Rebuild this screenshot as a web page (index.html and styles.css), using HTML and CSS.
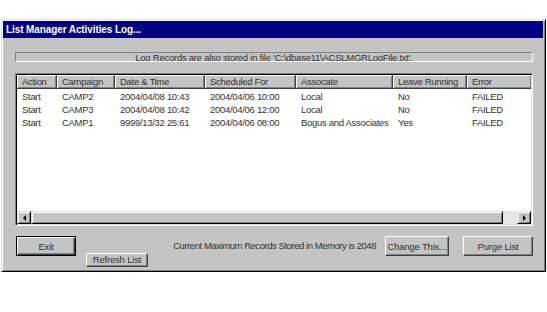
FILE: index.html
```html
<!DOCTYPE html>
<html>
<head>
<meta charset="utf-8">
<link rel="stylesheet" href="styles.css">
</head>
<body>
<div class="window">
  <div class="titlebar">List Manager Activities Log...</div>
  <div class="content">
    <div class="info"><span>Log Records are also stored in file 'C:\dbase11\ACSLMGRLogFile.txt'.</span></div>
    <div class="list">
      <div class="grid head">
        <div class="hc">Action</div>
        <div class="hc">Campaign</div>
        <div class="hc">Date &amp; Time</div>
        <div class="hc">Scheduled For</div>
        <div class="hc">Assocate</div>
        <div class="hc">Leave Running</div>
        <div class="hc last">Error</div>
      </div>
      <div class="rows">
        <div class="grid row">
          <div>Start</div><div>CAMP2</div><div>2004/04/08 10:43</div><div>2004/04/06 10:00</div><div>Local</div><div>No</div><div>FAILED</div>
        </div>
        <div class="grid row">
          <div>Start</div><div>CAMP3</div><div>2004/04/08 10:42</div><div>2004/04/06 12:00</div><div>Local</div><div>No</div><div>FAILED</div>
        </div>
        <div class="grid row">
          <div>Start</div><div>CAMP1</div><div>9999/13/32 25:61</div><div>2004/04/06 08:00</div><div>Bogus and Associates</div><div>Yes</div><div>FAILED</div>
        </div>
      </div>
      <div class="hscroll">
        <div class="sbtn"><i class="arrow-left"></i></div>
        <div class="thumb"></div>
        <div class="track"></div>
        <div class="sbtn"><i class="arrow-right"></i></div>
      </div>
    </div>
    <div class="actions">
      <button class="btn default exit">Exit</button>
      <button class="btn refresh">Refresh List</button>
      <span class="memtext">Current Maximum Records Stored in Memory is 2048</span>
      <button class="btn change">Change This...</button>
      <button class="btn purge">Purge List</button>
    </div>
  </div>
</div>
</body>
</html>
```

FILE: styles.css
```css
html, body {
  margin: 0;
  padding: 0;
  background: #ffffff;
}

body {
  font-family: "Liberation Sans", Arial, sans-serif;
  font-size: 9.5px;
  color: #333;
}

.window {
  margin: 19px 0 0 1px;
  width: 545px;
  height: 253px;
  box-sizing: border-box;
  background: #c4c4c4;
  border: 1px solid;
  border-color: #dfdfdf #000 #000 #dfdfdf;
  box-shadow: inset 1px 1px #fff, inset -1px -1px #808080;
  padding: 1px 2px 0 1px;
}

.titlebar {
  height: 17px;
  background: #000080;
  color: #fff;
  font-weight: bold;
  font-size: 10px;
  line-height: 17px;
  padding-left: 3px;
  letter-spacing: -0.1px;
}

.content {
  padding: 14px 0 0 12px;
  width: 518px;
}

.info {
  height: 10px;
  box-sizing: border-box;
  border: 1px solid;
  border-color: #808080 #fff #fff #808080;
  overflow: hidden;
  text-align: center;
  line-height: 10px;
  letter-spacing: -0.25px;
  color: #333;
}

.list {
  margin-top: 11px;
  height: 153px;
  box-sizing: border-box;
  border: 1px solid;
  border-color: #808080 #fff #fff #808080;
  box-shadow: inset 1px 1px #000, inset -1px -1px #dfdfdf;
  background: #fff;
  padding: 1px;
  display: flex;
  flex-direction: column;
}

.grid {
  display: grid;
  grid-template-columns: 40px 58px 90px 91px 97px 74px 1fr;
  letter-spacing: -0.3px;
}

.head {
  height: 14px;
  flex: none;
  background: #c4c4c4;
}

.hc {
  box-sizing: border-box;
  height: 14px;
  line-height: 14px;
  padding-left: 5px;
  border-right: 1px solid #404040;
  border-bottom: 1px solid #404040;
  box-shadow: inset 1px 1px #fff, inset -1px -1px #808080;
  color: #333;
  white-space: nowrap;
  overflow: hidden;
}

.hc.last {
  border-right: none;
}

.rows {
  flex: 1;
  padding-top: 1px;
}

.row {
  height: 13px;
  line-height: 13px;
}

.row > div {
  padding-left: 5px;
  white-space: nowrap;
}

.hscroll {
  flex: none;
  height: 13px;
  display: flex;
  background: #c4c4c4;
}

.sbtn {
  width: 14px;
  height: 13px;
  box-sizing: border-box;
  background: #c4c4c4;
  border: 1px solid;
  border-color: #dfdfdf #000 #000 #dfdfdf;
  box-shadow: inset 1px 1px #fff, inset -1px -1px #808080;
  display: flex;
  align-items: center;
  justify-content: center;
}

.arrow-left {
  width: 0;
  height: 0;
  border-top: 3px solid transparent;
  border-bottom: 3px solid transparent;
  border-right: 3px solid #000;
}

.arrow-right {
  width: 0;
  height: 0;
  border-top: 3px solid transparent;
  border-bottom: 3px solid transparent;
  border-left: 3px solid #000;
}

.thumb {
  width: 472px;
  box-sizing: border-box;
  background: #c4c4c4;
  border: 1px solid;
  border-color: #dfdfdf #000 #000 #dfdfdf;
  box-shadow: inset 1px 1px #fff, inset -1px -1px #808080;
}

.track {
  flex: 1;
  background: #e6e6e6;
}

.actions {
  margin-top: 10px;
  display: flex;
  align-items: flex-start;
  height: 31px;
}

.btn {
  font-family: "Liberation Sans", Arial, sans-serif;
  font-size: 9.5px;
  letter-spacing: -0.2px;
  color: #333;
  background: #c4c4c4;
  border: 1px solid;
  border-color: #fff #404040 #404040 #fff;
  box-shadow: inset -1px -1px #808080;
  padding: 0;
  margin: 0;
  height: 20px;
}

.btn.default {
  border-color: #000;
  box-shadow: inset 1px 1px #fff, inset -1px -1px #404040, inset -2px -2px #808080;
}

.exit {
  margin-left: 1px;
  width: 60px;
}

.refresh {
  margin-left: 10px;
  margin-top: 17px;
  width: 62px;
  height: 14px;
  line-height: 12px;
}

.memtext {
  margin-left: auto;
  margin-right: 9px;
  line-height: 20px;
  letter-spacing: -0.45px;
  color: #333;
  white-space: nowrap;
}

.change {
  width: 64px;
  margin-right: 14px;
}

.purge {
  width: 70px;
}
```
